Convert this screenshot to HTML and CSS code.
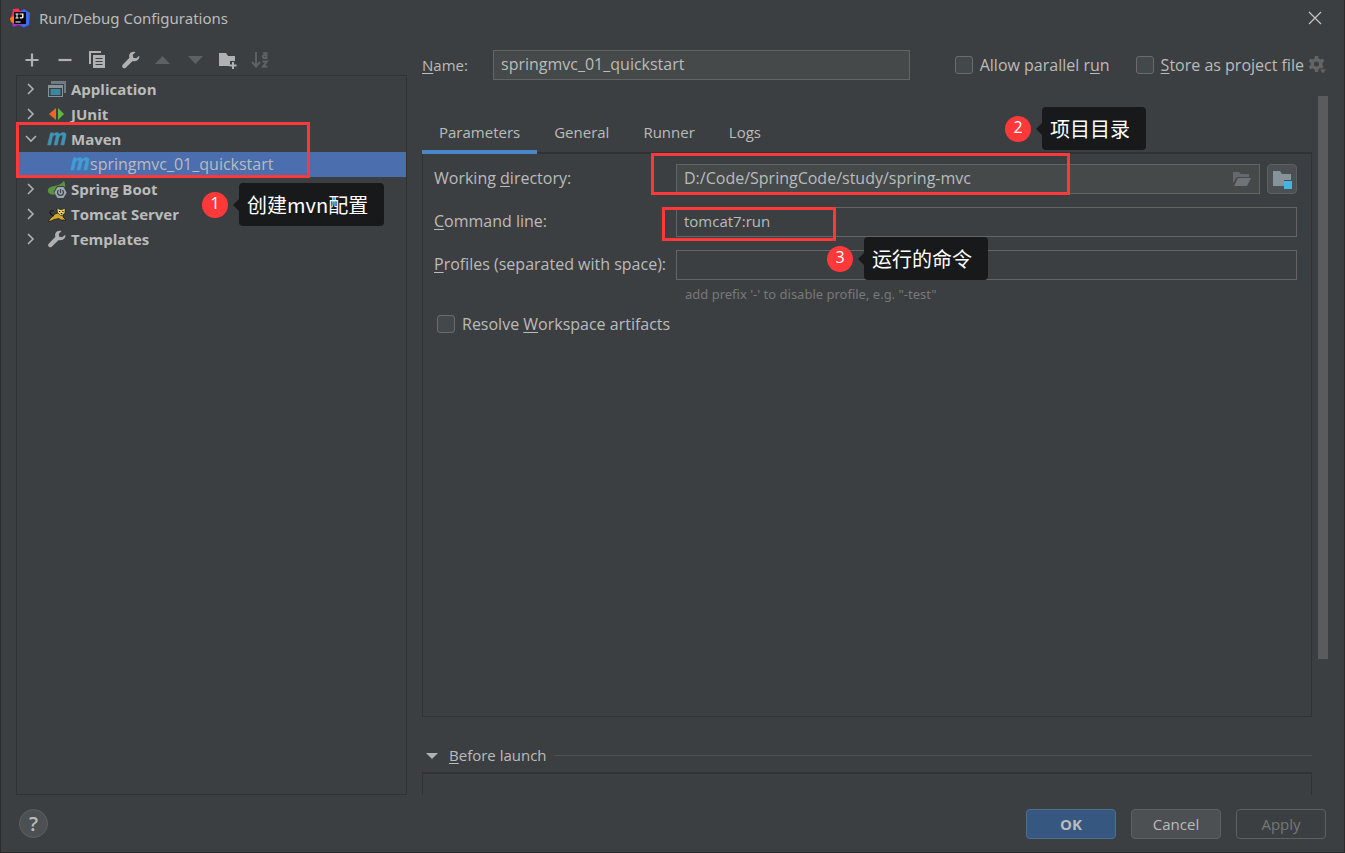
FILE: index.html
```html
<!DOCTYPE html>
<html lang="en">
<head>
<meta charset="utf-8">
<title>Run/Debug Configurations</title>
<link rel="stylesheet" href="styles.css">
</head>
<body>
<svg class="defs" aria-hidden="true">
  <symbol id="chevron" viewBox="0 0 16 16"><path d="M5 3l5 5-5 5" fill="none" stroke="#afb1b3" stroke-width="1.6"/></symbol>
  <symbol id="wrench" viewBox="0 0 16 16"><path d="M15.3 4.2l-2.7 2.3-2.6-.4-.5-2.6L12 .9C9.900 .1 7.700 .9 6.800 2.600c-.6 1.200-.6 2.300-.2 3.400L.6 12.200c-.7.8-.6 1.900.1 2.600s1.900.8 2.600.1L9.500 8.900c1.300.5 2.700.3 3.900-.4C15 7.500 15.800 5.700 15.300 4.200z" fill="#afb1b3"/></symbol>
  <symbol id="maven" viewBox="0 0 20 16"><path d="M3.500 1.800h3l-.4 1.800C7.400 2.200 8.700 1.500 10 1.500c1.400 0 2.200.7 2.400 2 1.200-1.400 2.600-2 4-2 2 0 3 1.300 2.500 3.500L17 14h-3.200l1.800-8c.3-1.300 0-1.900-.9-1.900-1.200 0-2.500 1.200-2.900 3L10.300 14H7.100l1.800-8c.3-1.300 0-1.900-.9-1.900-1.200 0-2.400 1.200-2.800 3L3.700 14H.6z" fill="currentColor" stroke="currentColor" stroke-width=".5"/></symbol>
</svg>
<div class="dialog">
  <header class="titlebar">
    <svg class="logo" viewBox="0 0 20 20"><path d="M3 1l5-.5 3 3-2 9-6 3L0 11l2-4z" fill="#fe315d"/><path d="M0 10l4-2 2 8-5-2z" fill="#f97a12"/><path d="M11 3l3-2 6 4-1 12-5 2.500-4-2z" fill="#3b6cf0"/><path d="M2 15h11l-2 3-3-1-5 2z" fill="#a52bd0"/><path d="M4 4h12v12H4z" fill="#080808"/><path d="M5.500 5.500h3v1h-1v3h1v1h-3v-1h1v-3h-1zM9.500 5.500h4V9c0 1.500-2.500 2-4 1l.6-1c1 .6 2 .4 2-.3V6.600H9.500zM5.500 13.500h5v1h-5z" fill="#fff"/></svg>
    <h1 class="title">Run/Debug Configurations</h1>
    <button class="icon-btn" aria-label="Close"><svg width="14" height="14" viewBox="0 0 14 14"><path d="M1 1l12 12M13 1L1 13" stroke="#c4c5c6" stroke-width="1.200"/></svg></button>
  </header>

  <main class="content">
    <section class="sidebar">
      <div class="toolbar">
        <button class="icon-btn" aria-label="Add"><svg class="tool" viewBox="0 0 18 18"><path d="M9 2.500v13M2.500 9h13" stroke="#afb1b3" stroke-width="2.200"/></svg></button>
        <button class="icon-btn" aria-label="Remove"><svg class="tool" viewBox="0 0 18 18"><path d="M2.500 9h13" stroke="#afb1b3" stroke-width="2.200"/></svg></button>
        <button class="icon-btn" aria-label="Copy"><svg class="tool" viewBox="0 0 18 18"><path d="M1 13V1h11" fill="none" stroke="#afb1b3" stroke-width="2"/><path d="M4 4h12v13H4z" fill="#afb1b3"/><path d="M6.500 7.500h7M6.500 10.500h7M6.500 13.500h7" stroke="#3c3f41" stroke-width="1.200"/></svg></button>
        <button class="icon-btn" aria-label="Edit templates"><svg class="tool"><use href="#wrench"/></svg></button>
        <button class="icon-btn" aria-label="Move up" disabled><svg class="tool" viewBox="1 0 18 18"><path d="M1 13l7.500-8 7.500 8z" fill="#5e6062"/></svg></button>
        <button class="icon-btn" aria-label="Move down" disabled><svg class="tool" viewBox="0 0 18 18"><path d="M0 5h15l-7.500 8z" fill="#5e6062"/></svg></button>
        <button class="icon-btn" aria-label="Create folder"><svg class="tool" viewBox="2 0 18 18" overflow="visible"><path d="M0 2h7l2 3h7v5h-5v5H0z" fill="#afb1b3"/><path d="M14 11v7M10.500 14.500h7" stroke="#afb1b3" stroke-width="2"/></svg></button>
        <button class="icon-btn" aria-label="Sort" disabled><svg class="tool" viewBox="3 0 18 18" overflow="visible" fill="none" stroke="#606264" stroke-width="1.900"><path d="M5 1v14M1 11l4 4.500L9 11M12 2.200h3.500V7H13a1.300 1.300 0 010-2.600h2.500M11.500 10.500H16l-4 5h4.500"/></svg></button>
      </div>
      <ul class="tree">
        <li class="row"><svg class="arrow"><use href="#chevron"/></svg><svg class="type" viewBox="0 0 20 20"><path d="M4 2h15v12h-2V5H4z" fill="#6f7c84"/><path d="M1 6h15v12H1z" fill="#87939a"/><path d="M2 9h13v8H2z" fill="#3c3f41"/><path d="M3.500 10h10v6h-10z" fill="#3e86a0"/></svg><span>Application</span></li>
        <li class="row"><svg class="arrow"><use href="#chevron"/></svg><svg class="type" viewBox="0 0 20 20"><path d="M9 4v12l-7-6z" fill="#f26522"/><path d="M11 4v12l6-6z" fill="#62b543"/></svg><span>JUnit</span></li>
        <li class="row"><svg class="arrow open"><use href="#chevron"/></svg><svg class="type maven"><use href="#maven"/></svg><span>Maven</span></li>
        <li class="row selected"><svg class="type maven"><use href="#maven"/></svg><span>springmvc_01_quickstart</span></li>
        <li class="row"><svg class="arrow"><use href="#chevron"/></svg><svg class="type" viewBox="0 0 20 20"><path d="M17 2c2 4 2 9-3 12-4 2-8 2-11 1-3-2-3-6 1-7 5-2 9-1 13-6z" fill="#57963f"/><path d="M10 7h7l3.500 6-3.500 7h-7l-3.500-7z" fill="#3c3f41"/><path d="M10.500 8h6l3.200 5.500-3.200 5.500h-6l-3.200-5.500z" fill="#9aa7b0"/><path d="M11.500 11.200a3 3 0 104 0M13.500 10v4" fill="none" stroke="#3c3f41" stroke-width="1.200"/></svg><span>Spring Boot</span></li>
        <li class="row"><svg class="arrow"><use href="#chevron"/></svg><svg class="type" viewBox="0 0 20 20"><path d="M8 10l3-1 5 1v3l3 3h-5l-2-1.500-5 1-3 1.500H1l3-3z" fill="#d6a52c" stroke="#181818" stroke-width=".7"/><path d="M10 4l3 1.500h2.500L18 4v4.500l-2.500 3h-2l-3-3z" fill="#f0ce70" stroke="#181818" stroke-width=".6"/><path d="M12 7.500h1.200M15.300 7.500h1.200M13.800 9.700h1.400" stroke="#111" stroke-width="1.200"/><path d="M7 12C4 11 2 9 3.500 7l3-.5" stroke="#171717" stroke-width="1.200" fill="none"/></svg><span>Tomcat Server</span></li>
        <li class="row"><svg class="arrow"><use href="#chevron"/></svg><svg class="type template"><use href="#wrench"/></svg><span>Templates</span></li>
      </ul>
      <div class="mark mark-config"></div>
      <div class="note note-config"><b class="num">1</b><span class="tip" lang="zh">创建mvn配置</span></div>
    </section>

    <section class="editor">
      <div class="name-row">
        <label class="name-label" for="name"><u>N</u>ame:</label>
        <input class="field name-input" id="name" value="springmvc_01_quickstart">
        <label class="check parallel"><input type="checkbox"><span>Allow parallel r<u>u</u>n</span></label>
        <label class="check"><input type="checkbox"><span><u>S</u>tore as project file</span></label>
        <button class="icon-btn gear" aria-label="Storage options" disabled><svg width="20" height="20" viewBox="0 0 20 20"><circle cx="8.500" cy="9" r="4.300" fill="none" stroke="#626466" stroke-width="3.600"/><path d="M8.500 1v3M8.500 14v3M1.500 5l2.700 1.500M12.800 11.500l2 1.200M1.500 13l2.700-1.500M12.800 6.500L15.500 5" stroke="#626466" stroke-width="3.400"/><path d="M11 14h8l-4 5z" fill="#626466" stroke="#3c3f41"/></svg></button>
      </div>

      <div class="scroll-area">
        <nav class="tabs" role="tablist">
          <button class="tab active" role="tab" aria-selected="true">Parameters</button>
          <button class="tab" role="tab">General</button>
          <button class="tab" role="tab">Runner</button>
          <button class="tab" role="tab">Logs</button>
        </nav>
        <div class="panel">
          <div class="form">
            <label for="dir">Working <u>d</u>irectory:</label>
            <div class="dir-row">
              <div class="field browse">
                <input id="dir" value="D:/Code/SpringCode/study/spring-mvc">
                <svg width="20" height="16" viewBox="0 0 20 16"><path d="M1 12V1h6l2 2h8v3H5z" fill="#64696c"/><path d="M6 7h13l-4 8H2z" fill="#6d7376"/></svg>
              </div>
              <button class="module-btn" aria-label="Select module"><svg width="20" height="20" viewBox="0 0 20 20"><path d="M1 2h7l2 3h9v6h-7v6H1z" fill="#87939a"/><path d="M12 12h8v8h-8z" fill="#40b6e0"/></svg></button>
            </div>
            <label for="cmd"><u>C</u>ommand line:</label>
            <input class="field dark" id="cmd" value="tomcat7:run">
            <label for="profiles"><u>P</u>rofiles (separated with space):</label>
            <input class="field dark" id="profiles">
          </div>
          <p class="hint">add prefix '-' to disable profile, e.g. "-test"</p>
          <label class="check"><input type="checkbox"><span>Resolve <u>W</u>orkspace artifacts</span></label>
        </div>
        <div class="before">
          <svg width="12" height="8" viewBox="0 0 12 8"><path d="M0 1h12L6 7z" fill="#afb1b3"/></svg>
          <span><u>B</u>efore launch</span>
          <hr>
        </div>
        <div class="tasks"></div>
        <div class="scrollbar"></div>
      </div>
      <div class="mark mark-dir"></div>
      <div class="mark mark-cmd"></div>
      <div class="note note-dir"><b class="num">2</b><span class="tip" lang="zh">项目目录</span></div>
      <div class="note note-cmd"><b class="num">3</b><span class="tip" lang="zh">运行的命令</span></div>
    </section>
  </main>

  <footer class="footer">
    <button class="help" aria-label="Help">?</button>
    <button class="btn primary">OK</button>
    <button class="btn">Cancel</button>
    <button class="btn apply" disabled>Apply</button>
  </footer>
</div>
</body>
</html>
```
FILE: styles.css
```css
* { box-sizing: border-box; }
body {
  margin: 0;
  background: #3c3f41;
  color: #bbbbbb;
  font: 15px/20px "Open Sans", "Noto Sans", "Noto Sans CJK SC", sans-serif;
}
button, input { font: inherit; color: inherit; }
button { padding: 0; border: 0; background: none; }
u { text-underline-offset: 2px; }
.defs { position: absolute; width: 0; height: 0; }
.dialog {
  display: flex;
  flex-direction: column;
  height: 100vh;
  min-height: 600px;
  border: solid #2b2b2b;
  border-width: 0 1px 1px;
}
.titlebar {
  display: flex;
  align-items: center;
  gap: 9px;
  height: 36px;
  padding: 0 22px 0 9px;
}
.logo { width: 20px; height: 20px; }
.title { flex: 1; margin: 0; font-family: "Noto Sans", sans-serif; font-size: 15px; font-weight: 400; }
.icon-btn { display: flex; align-items: center; justify-content: center; }
.content { display: flex; flex: 1; min-height: 0; padding-left: 15px; gap: 15px; }

.sidebar { position: relative; display: flex; flex-direction: column; width: 391px; flex: none; }
.toolbar { display: flex; align-items: center; gap: 15px; height: 39px; padding: 9px 7px 0; }
.tool { width: 18px; height: 18px; }
.tree { flex: 1; margin: 0; padding: 1px 0 0; border: 1px solid #323232; list-style: none; }
.row { display: flex; align-items: center; height: 25px; padding: 0 0 2px 6px; font-weight: 700; }
.arrow { width: 16px; height: 16px; margin-right: 8px; }
.arrow.open { transform: rotate(90deg); }
.type { width: 20px; height: 20px; margin-right: 4px; }
.template { height: 18px; }
.maven { height: 16px; color: #4093b5; }
.row.selected { padding-left: 53px; background: #4b6eaf; font-size: 16px; font-weight: 400; }
.selected .maven { margin-right: 0; color: #3f9ed2; }

.editor { position: relative; display: flex; flex: 1; flex-direction: column; min-width: 0; }
.name-row { display: flex; align-items: center; height: 30px; margin: 14px 16px 16px 0; }
.name-label { width: 71px; }
.field {
  width: 100%;
  height: 30px;
  min-width: 0;
  padding: 0 7px 2px;
  border: 1px solid #646464;
  background: #45494a;
  font-size: 16px;
}
.field.dark { background: none; font-size: 15px; }
.name-input { flex: 1; margin-right: 45px; }
.check { display: flex; align-items: center; gap: 7px; font-size: 16px; white-space: nowrap; }
.check input {
  appearance: none;
  width: 18px;
  height: 18px;
  margin: 0;
  border: 1px solid #6b6b6b;
  border-radius: 3px;
  background: #43494a;
}
.parallel { margin-right: 26px; }
.gear { margin-left: 4px; }

.scroll-area {
  position: relative;
  display: flex;
  flex: 1;
  flex-direction: column;
  min-height: 0;
  padding: 15px 32px 0 0;
}
.scrollbar { position: absolute; top: 0; right: 16px; bottom: 136px; width: 10px; background: #595b5d; }
.tabs { display: flex; height: 43px; border-bottom: 2px solid #323232; }
.tab { height: 43px; padding: 2px 17px 0; border-bottom: 4px solid transparent; }
.tab.active { border-color: #4a88c7; }
.panel { flex: 1; padding: 10px 14px 0 11px; border: 1px solid #323232; border-top: 0; }
.form { display: grid; grid-template-columns: 228px 1fr; grid-auto-rows: 30px; align-items: center; column-gap: 14px; row-gap: 13px; }
.form label { padding-bottom: 2px; font-size: 16px; white-space: nowrap; }
.dir-row { display: flex; gap: 7px; }
.browse { display: flex; align-items: center; flex: 1; padding-bottom: 0; }
.browse input { flex: 1; min-width: 0; padding: 0 0 2px; border: 0; background: none; }
.module-btn {
  display: flex;
  align-items: center;
  justify-content: center;
  width: 30px;
  height: 30px;
  border: 1px solid #5e6060;
  border-radius: 4px;
  background: #4c5052;
}
.hint { margin: 4px 0 10px 251px; color: #787878; font-family: "Noto Sans", sans-serif; font-size: 13px; line-height: 20px; }
.panel > .check { margin-left: 3px; }
.before { display: flex; align-items: center; height: 55px; padding: 22px 0 0 4px; }
.before span { margin: 0 7px 0 11px; padding-bottom: 2px; }
.before hr { flex: 1; margin: 0; border: 0; border-top: 1px solid #515151; }
.tasks { height: 23px; border: solid #323232; border-width: 2px 1px 0; }

.footer { display: flex; align-items: center; gap: 15px; height: 57px; padding: 0 18px; }
.help {
  width: 29px;
  height: 29px;
  margin-right: auto;
  border: 1px solid #5e6060;
  border-radius: 50%;
  background: #4c5052;
  font-size: 20px;
  font-weight: 600;
}
.btn { width: 90px; height: 30px; border: 1px solid #5e6060; border-radius: 4px; background: #4c5052; }
.primary { border-color: #4c708c; background: #365880; font-weight: 700; }
.apply { background: none; color: #777777; }

.mark { position: absolute; border: 3px solid #ff3939; pointer-events: none; }
.mark-config { top: 86px; left: 0; width: 294px; height: 56px; }
.mark-dir { top: 117px; left: 229px; width: 419px; height: 42px; }
.mark-cmd { top: 171px; left: 240px; width: 174px; height: 34px; }
.note { position: absolute; display: flex; align-items: center; gap: 11px; color: #ffffff; }
.num {
  width: 26px;
  height: 26px;
  border-radius: 50%;
  background: #ff3939;
  font-size: 16px;
  font-weight: 400;
  line-height: 22px;
  text-align: center;
}
.tip {
  position: relative;
  height: 43px;
  padding: 0 16px 0 8px;
  border-radius: 4px;
  background: #18191b;
  font: 20px/43px "Noto Sans CJK SC", sans-serif;
  white-space: nowrap;
}
.tip::before {
  content: "";
  position: absolute;
  top: 16px;
  left: -6px;
  border: solid transparent;
  border-width: 6px 6px 6px 0;
  border-right-color: #18191b;
}
.note-config { top: 147px; left: 186px; }
.note-dir { top: 71px; left: 583px; }
.note-cmd { top: 201px; left: 405px; }
```
